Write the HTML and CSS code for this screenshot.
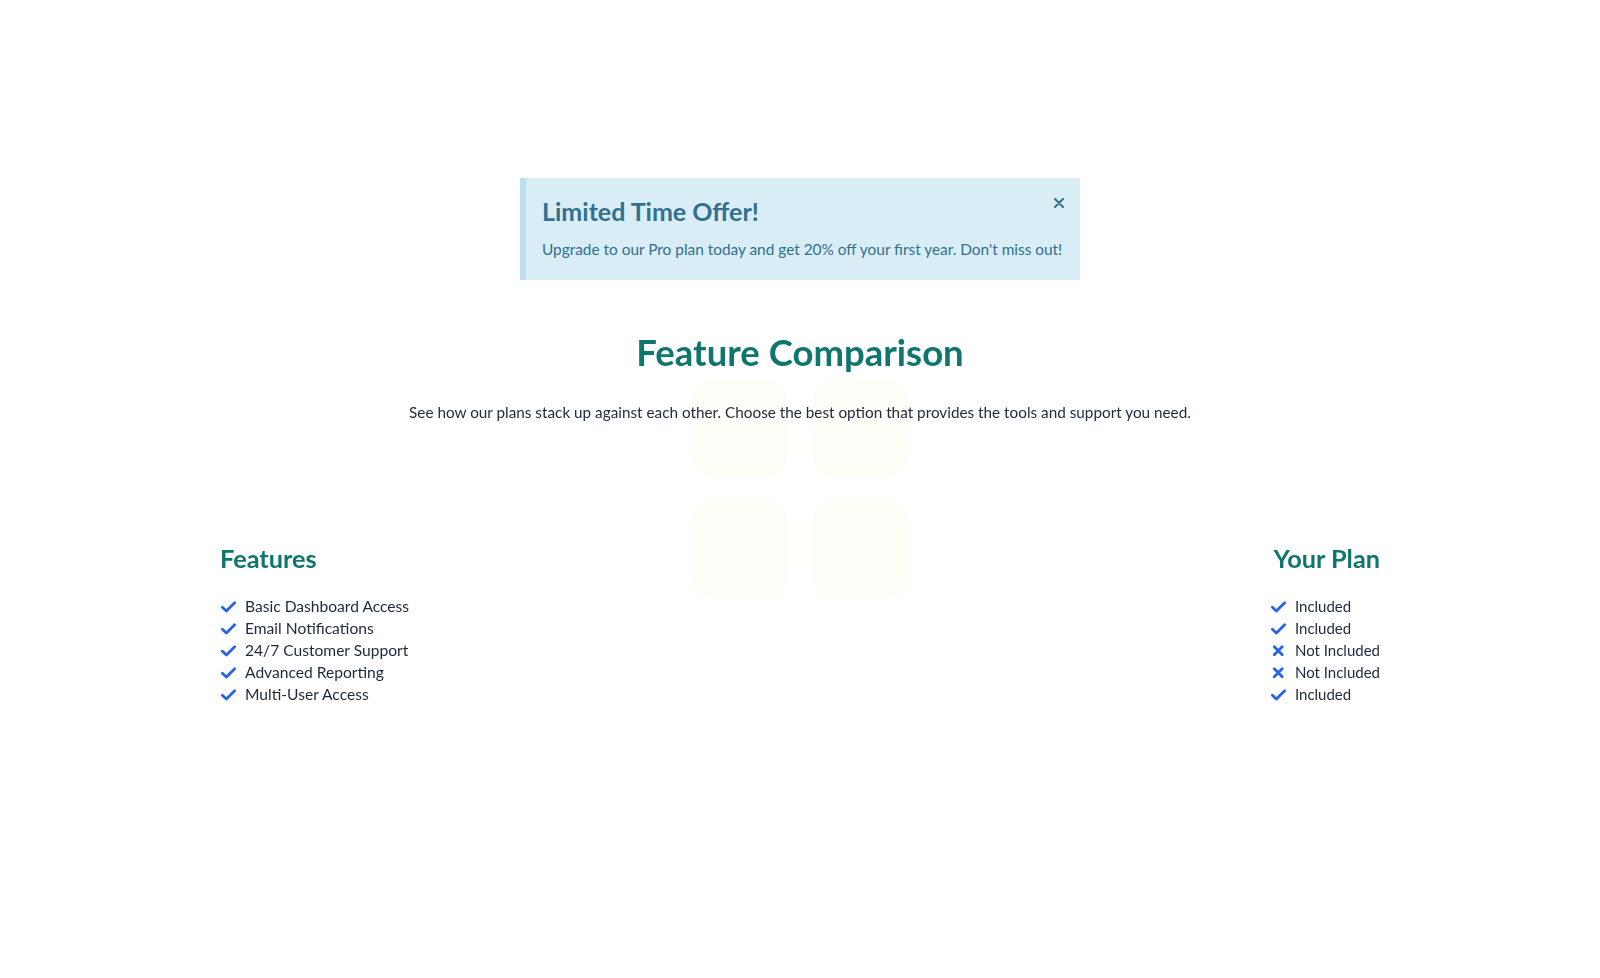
FILE: index.html
```html
<!DOCTYPE html>
<html lang="en">
<head>
<meta charset="utf-8">
<title>Feature Comparison</title>
<link rel="stylesheet" href="styles.css">
</head>
<body>
<div class="decor" aria-hidden="true">
  <div class="tile"></div><div class="tile"></div>
  <div class="tile"></div><div class="tile"></div>
</div>
<main class="page">
  <div class="offer">
    <h3 class="offer-title">Limited Time Offer!</h3>
    <p class="offer-text">Upgrade to our Pro plan today and get 20% off your first year. Don't miss out!</p>
    <button class="offer-close" aria-label="Close">
      <svg width="10" height="10" viewBox="0 0 10 10"><path d="M1 1L9 9M9 1L1 9" stroke="#31708f" stroke-width="2" stroke-linecap="round"/></svg>
    </button>
  </div>

  <h1 class="title">Feature Comparison</h1>
  <p class="subtitle">See how our plans stack up against each other. Choose the best option that provides the tools and support you need.</p>

  <section class="compare">
    <div class="col">
      <h2 class="col-title">Features</h2>
      <ul class="list">
        <li><svg class="ic" viewBox="0 0 16 16"><path d="M2.2 8.6L6 12.2L13.8 4.4" /></svg>Basic Dashboard Access</li>
        <li><svg class="ic" viewBox="0 0 16 16"><path d="M2.2 8.6L6 12.2L13.8 4.4" /></svg>Email Notifications</li>
        <li><svg class="ic" viewBox="0 0 16 16"><path d="M2.2 8.6L6 12.2L13.8 4.4" /></svg>24/7 Customer Support</li>
        <li><svg class="ic" viewBox="0 0 16 16"><path d="M2.2 8.6L6 12.2L13.8 4.4" /></svg>Advanced Reporting</li>
        <li><svg class="ic" viewBox="0 0 16 16"><path d="M2.2 8.6L6 12.2L13.8 4.4" /></svg>Multi-User Access</li>
      </ul>
    </div>
    <div class="col col-right">
      <h2 class="col-title">Your Plan</h2>
      <ul class="list">
        <li><svg class="ic" viewBox="0 0 16 16"><path d="M2.2 8.6L6 12.2L13.8 4.4" /></svg>Included</li>
        <li><svg class="ic" viewBox="0 0 16 16"><path d="M2.2 8.6L6 12.2L13.8 4.4" /></svg>Included</li>
        <li><svg class="ic" viewBox="0 0 16 16"><path d="M4 4.5L11.5 12M11.5 4.5L4 12" /></svg>Not Included</li>
        <li><svg class="ic" viewBox="0 0 16 16"><path d="M4 4.5L11.5 12M11.5 4.5L4 12" /></svg>Not Included</li>
        <li><svg class="ic" viewBox="0 0 16 16"><path d="M2.2 8.6L6 12.2L13.8 4.4" /></svg>Included</li>
      </ul>
    </div>
  </section>
</main>
</body>
</html>
```
FILE: styles.css
```css
* { box-sizing: border-box; }
html { background: #ffffff; }
body {
  margin: 0;
  padding: 0;
  font-family: Lato, "Noto Sans", sans-serif;
  color: #1e293b;
}
.decor {
  position: fixed;
  left: 50%;
  top: 50%;
  transform: translate(-50%, -50%);
  display: grid;
  grid-template-columns: 98px 98px;
  grid-template-rows: 98px 98px;
  gap: 24px;
  z-index: -1;
}
.tile {
  background: #fefdf7;
  border-radius: 22px;
}
.page {
  padding-top: 178px;
}
.offer {
  position: relative;
  width: 560px;
  margin: 0 auto;
  background: #d9edf7;
  border-left: 6px solid #bddff2;
  padding: 17px 16px 19px 16px;
  color: #31708f;
}
.offer-title {
  margin: 0 0 10px;
  font-size: 25px;
  line-height: 32px;
  font-weight: 700;
}
.offer-text {
  margin: 0;
  font-size: 15.4px;
  line-height: 24px;
}
.offer-close {
  position: absolute;
  top: 19px;
  right: 15px;
  width: 12px;
  height: 12px;
  padding: 1px;
  border: 0;
  background: transparent;
  display: flex;
  align-items: center;
  justify-content: center;
}
.title {
  margin: 50px 0 0;
  text-align: center;
  font-size: 36.5px;
  line-height: 44px;
  font-weight: 700;
  color: #0f766e;
}
.subtitle {
  margin: 26px 0 0;
  text-align: center;
  font-size: 15.3px;
  line-height: 24px;
}
.compare {
  width: 1160px;
  margin: 118px auto 0;
  display: flex;
  justify-content: space-between;
}
.col-title {
  margin: 0;
  font-size: 25.3px;
  line-height: 32px;
  font-weight: 700;
  color: #0f766e;
}
.col-right .col-title { text-align: right; }
.list {
  list-style: none;
  margin: 21px 0 0;
  padding: 0;
}
.list li {
  display: flex;
  align-items: center;
  gap: 8px;
  font-size: 15.6px;
  line-height: 22px;
  height: 22px;
}
.col-right .list li { font-size: 15px; }
.ic {
  width: 17px;
  height: 17px;
  flex: none;
  fill: none;
  stroke: #2563eb;
  stroke-width: 2.6;
  stroke-linecap: round;
  stroke-linejoin: round;
}
```
